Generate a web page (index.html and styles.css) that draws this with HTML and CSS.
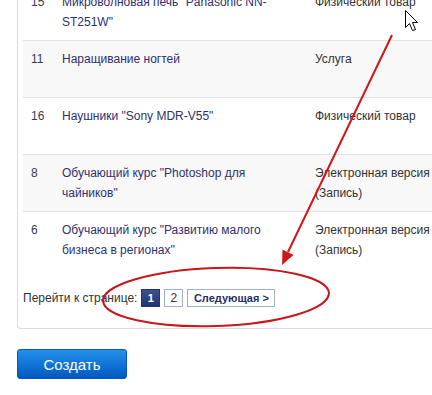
FILE: index.html
```html
<!DOCTYPE html>
<html lang="ru">
<head>
<meta charset="utf-8">
<title>Товары</title>
<link rel="stylesheet" href="styles.css">
</head>
<body>
<div class="page">
  <div class="panel">
    <table class="grid">
      <tr>
        <td class="id">15</td>
        <td class="name">Микроволновая печь "Panasonic NN-ST251W"</td>
        <td class="type">Физический товар</td>
        <td class="extra"></td>
      </tr>
      <tr class="alt">
        <td class="id">11</td>
        <td class="name">Наращивание ногтей</td>
        <td class="type">Услуга</td>
        <td class="extra"></td>
      </tr>
      <tr>
        <td class="id">16</td>
        <td class="name">Наушники "Sony MDR-V55"</td>
        <td class="type">Физический товар</td>
        <td class="extra"></td>
      </tr>
      <tr class="alt">
        <td class="id">8</td>
        <td class="name">Обучающий курс "Photoshop для чайников"</td>
        <td class="type">Электронная версия (Запись)</td>
        <td class="extra"></td>
      </tr>
      <tr class="last">
        <td class="id">6</td>
        <td class="name">Обучающий курс "Развитию малого бизнеса в регионах"</td>
        <td class="type">Электронная версия (Запись)</td>
        <td class="extra"></td>
      </tr>
    </table>
    <div class="pager">
      <span class="pager-label">Перейти к странице:</span>
      <span class="pg pg-current">1</span>
      <a class="pg" href="#">2</a>
      <a class="pg pg-next" href="#">Следующая &gt;</a>
    </div>
  </div>
  <button class="btn-create" type="button">Создать</button>
</div>
<svg class="annotation" width="432" height="395" viewBox="0 0 432 395">
  <ellipse cx="216" cy="297" rx="113" ry="29" transform="rotate(-2 216 297)" fill="none" stroke="#c8161a" stroke-width="2"/>
  <line x1="392" y1="35" x2="288" y2="252" stroke="#d0161a" stroke-width="2"/>
  <polygon points="282,265 293.5,255 282.5,249.5" fill="#d0161a"/>
  <path transform="translate(405.5 10.5)" d="M0,0 L0,17 L4,13 L7,20 L10,19 L7,12 L12,12 Z" fill="#fff" stroke="#000" stroke-width="1" stroke-linejoin="round"/>
</svg>
</body>
</html>
```
FILE: styles.css
```css
html, body {
  margin: 0;
  padding: 0;
  background: #fff;
  overflow: hidden;
}
body {
  width: 432px;
  height: 395px;
  position: relative;
  font-family: "Liberation Sans", Arial, sans-serif;
  font-size: 12px;
  color: #333;
}
.page {
  padding-left: 17px;
}
.panel {
  width: 560px;
  margin-top: -16px;
  border: 1px solid #dcdcdc;
  border-top: none;
  border-radius: 0 0 4px 4px;
  padding: 0 5px;
}
.grid {
  border-collapse: collapse;
  width: 540px;
  table-layout: fixed;
}
.grid tr {
  border-bottom: 1px solid #e2e2e2;
}
.grid tr.last {
  border-bottom: none;
}
.grid tr.alt {
  background: #f8f8f8;
}
.grid td {
  vertical-align: top;
  padding: 8px;
  height: 40px;
  line-height: 20px;
}
.grid td.id {
  width: 15px;
  color: #3a3a55;
}
.grid td.name {
  width: 237px;
  color: #30306e;
}
.grid td.type {
  width: 130px;
  color: #333;
  white-space: normal;
}
.grid td.extra {
  padding: 0;
}
.pager {
  display: flex;
  align-items: center;
  gap: 4px;
  padding: 21px 0;
  height: 18px;
}
.pager-label {
  color: #333;
  line-height: 18px;
}
.pg {
  box-sizing: border-box;
  height: 18px;
  min-width: 19px;
  padding: 0 4px;
  border: 1px solid #9fb0cc;
  background: #fff;
  color: #333;
  font-size: 12px;
  line-height: 16px;
  text-align: center;
  text-decoration: none;
}
.pg-current {
  background: linear-gradient(#3d5190, #213472);
  border-color: #213472;
  color: #fff;
  font-weight: bold;
  font-size: 11px;
}
.pg-next {
  width: 88px;
  font-weight: bold;
  font-size: 11px;
  color: #1f2f66;
}
.btn-create {
  display: block;
  margin-top: 20px;
  width: 110px;
  height: 30px;
  border: 1px solid #0a56b4;
  border-radius: 3px;
  background: linear-gradient(#2590ea, #0058c2);
  color: #fff;
  font-family: "Liberation Sans", Arial, sans-serif;
  font-size: 15px;
  padding: 0;
}
.annotation {
  position: absolute;
  left: 0;
  top: 0;
  pointer-events: none;
}
```
